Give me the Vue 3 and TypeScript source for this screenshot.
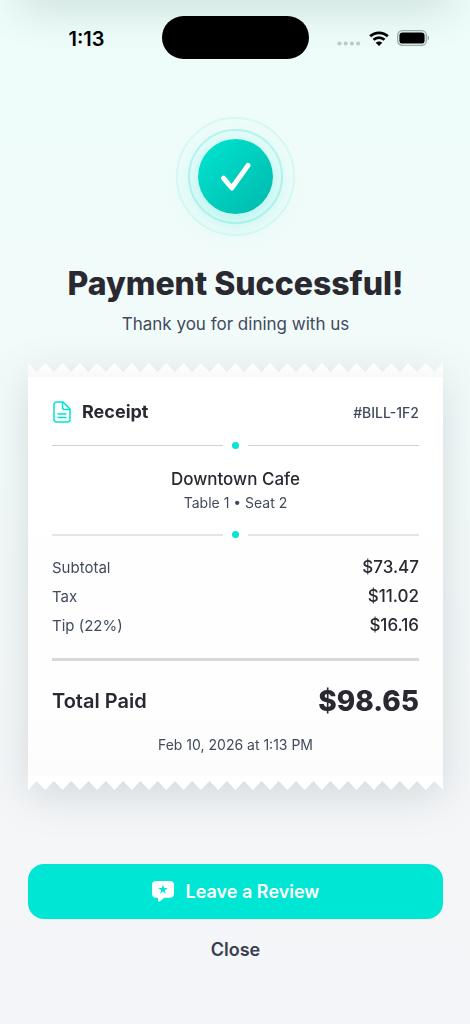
<script setup lang="ts">
interface Charge {
  label: string
  amount: string
}

const charges: Charge[] = [
  { label: 'Subtotal', amount: '$73.47' },
  { label: 'Tax', amount: '$11.02' },
  { label: 'Tip (22%)', amount: '$16.16' },
]

const TEETH = 24

// Torn paper edges: a peak at every even x, a notch at every odd x.
function zigzag(base: number, peak: number, notch: number): string {
  const points: string[] = [`0,${base}`]
  for (let i = 0; i <= TEETH * 2; i++) {
    points.push(`${i},${i % 2 === 0 ? peak : notch}`)
  }
  points.push(`${TEETH * 2},${base}`)
  return points.join(' ')
}

const viewBox = `0 0 ${TEETH * 2} 14`
const topEdge = zigzag(14, 0, 9)
const bottomEdge = zigzag(0, 14, 5)
</script>

<template>
  <div class="page">
    <div class="top-shade"></div>

    <header class="status">
      <span class="time">1:13</span>
      <span class="island"></span>
      <span class="indicators">
        <svg class="dots" viewBox="0 0 24 5" aria-hidden="true">
          <circle cx="2.5" cy="2.5" r="2.1" />
          <circle cx="8.7" cy="2.5" r="2.1" />
          <circle cx="14.9" cy="2.5" r="2.1" />
          <circle cx="21.1" cy="2.5" r="2.1" />
        </svg>
        <svg class="wifi" viewBox="0 0 20 15" aria-hidden="true">
          <path d="M1.2 5.3C6.1.6 13.9.6 18.8 5.3" />
          <path d="M4.5 8.8C7.6 5.9 12.4 5.9 15.5 8.8" />
          <path class="solid" d="M10 15 6.7 11.7c1.8-1.7 4.8-1.7 6.6 0Z" />
        </svg>
        <svg class="battery" viewBox="0 0 33 16" aria-hidden="true">
          <rect x=".7" y=".7" width="28.6" height="14.6" rx="4.6" class="shell" />
          <rect x="2.4" y="2.4" width="25.2" height="11.2" rx="3.2" />
          <path d="M30.6 5.6c2 .7 2 4.1 0 4.8Z" class="cap" />
        </svg>
      </span>
    </header>

    <main class="content">
      <div class="badge">
        <div class="ring">
          <div class="disc">
            <svg viewBox="0 0 32 32" aria-hidden="true"><path d="M3.5 17.2 11.8 27 28 4.4" /></svg>
          </div>
        </div>
      </div>
      <h1>Payment Successful!</h1>
      <p class="thanks">Thank you for dining with us</p>

      <section class="receipt">
        <svg class="edge" :viewBox="viewBox" preserveAspectRatio="none" aria-hidden="true">
          <defs>
            <linearGradient id="edge-fill" x1="0" y1="0" x2="0" y2="1">
              <stop offset="0" stop-color="#ffffff" />
              <stop offset="1" stop-color="#f8f8f8" />
            </linearGradient>
          </defs>
          <polygon :points="topEdge" fill="url(#edge-fill)" />
        </svg>
        <div class="body">
          <div class="head">
            <svg class="doc" viewBox="0 0 18 22" aria-hidden="true">
              <path d="M3.4 1H10l7 7v10.6A2.4 2.4 0 0 1 14.6 21H3.4A2.4 2.4 0 0 1 1 18.6V3.4A2.4 2.4 0 0 1 3.4 1Z" />
              <path d="M9.5 1.2V6.6A1.9 1.9 0 0 0 11.4 8.5H16.8M5 13H13M5 16.5H13" />
            </svg>
            <h2>Receipt</h2>
            <span class="bill">#BILL-1F2</span>
          </div>
          <div class="divider"><i></i></div>
          <p class="venue">Downtown Cafe</p>
          <p class="seat">Table 1 • Seat 2</p>
          <div class="divider light"><i></i></div>
          <dl class="charges">
            <div v-for="c in charges" :key="c.label" class="row">
              <dt>{{ c.label }}</dt>
              <dd>{{ c.amount }}</dd>
            </div>
          </dl>
          <div class="total">
            <span class="total-label">Total Paid</span>
            <strong>$98.65</strong>
          </div>
          <p class="date">Feb 10, 2026 at 1:13 PM</p>
        </div>
        <svg class="edge" :viewBox="viewBox" preserveAspectRatio="none" aria-hidden="true">
          <polygon :points="bottomEdge" fill="#ffffff" />
        </svg>
      </section>

      <div class="actions">
        <button type="button" class="review">
          <svg viewBox="0 0 22 21" aria-hidden="true">
            <path
              fill-rule="evenodd"
              d="M4 0H18A4 4 0 0 1 22 4V12.8A4 4 0 0 1 18 16.8H12.5L8 20.3C7 21.1 6 20.6 6 19.5V16.8H4A4 4 0 0 1 0 12.8V4A4 4 0 0 1 4 0ZM11 3.7 9.9 7.1H6.3L9.2 9.2 8.1 12.7 11 10.6 13.9 12.7 12.8 9.2 15.7 7.1H12.1Z"
            />
          </svg>
          Leave a Review
        </button>
        <button type="button" class="close">Close</button>
      </div>
    </main>
  </div>
</template>

<style>
body {
  margin: 0;
}
</style>

<style scoped>
.page {
  position: relative;
  overflow: hidden;
  box-sizing: border-box;
  min-height: 100vh;
  background: linear-gradient(180deg, #edfdfa 0%, #f1fbfa 30%, #f4f6f8 80%, #f4f5f8 100%);
  color: #2a2830;
  font-family: Inter, 'Liberation Sans', sans-serif;
}
h1,
h2,
p,
dl,
dd {
  margin: 0;
}
button {
  border: 0;
  padding: 0;
  font-family: inherit;
  cursor: pointer;
}
.top-shade {
  position: absolute;
  top: -40px;
  left: 20px;
  right: 20px;
  height: 40px;
  box-shadow: 0 8px 44px rgba(0, 40, 30, 0.15);
}
.status {
  position: relative;
  display: grid;
  grid-template-columns: 1fr 147px 1fr;
  align-items: center;
  height: 75px;
  padding-left: 1px;
}
.time {
  justify-self: center;
  padding: 2px 0 0 10px;
  color: #000;
  font-size: 20px;
  font-weight: 600;
  line-height: 24px;
}
.island {
  height: 43px;
  border-radius: 22px;
  background: #000;
}
.indicators {
  display: flex;
  align-items: center;
  padding: 1px 0 0 28px;
}
.dots {
  width: 24px;
  height: 5px;
  margin: 10px 8px 0 0;
  fill: #b9cbc8;
}
.wifi {
  width: 20px;
  height: 15px;
  margin-right: 8px;
  fill: none;
  stroke: #000;
  stroke-width: 2.8;
}
.wifi .solid {
  fill: #000;
  stroke: none;
}
.battery {
  width: 33px;
  height: 16px;
}
.battery .shell {
  fill: none;
  stroke: #9aaaa7;
  stroke-width: 1.3;
}
.battery .cap {
  fill: #9aaaa7;
}
.content {
  position: relative;
  display: flex;
  flex-direction: column;
  padding: 42px 27px 52px 28px;
}
.badge,
.ring,
.disc {
  display: flex;
  align-items: center;
  justify-content: center;
  box-sizing: border-box;
  border-radius: 50%;
}
.badge {
  align-self: center;
  width: 119px;
  height: 119px;
  border: 2px solid #d8f8f4;
}
.ring {
  width: 95px;
  height: 95px;
  border: 2px solid #bdf4ee;
}
.disc {
  width: 75px;
  height: 75px;
  background: linear-gradient(135deg, #00e5d0, #00b8ac);
  box-shadow: 0 6px 28px rgba(0, 229, 208, 0.35);
}
.disc svg {
  width: 32px;
  height: 32px;
  fill: none;
  stroke: #fff;
  stroke-width: 5;
  stroke-linecap: round;
  stroke-linejoin: round;
}
h1 {
  margin-top: 28px;
  font-size: 32px;
  font-weight: 800;
  line-height: 40px;
  text-align: center;
}
.thanks {
  margin-top: 8px;
  color: #414a5c;
  font-size: 17px;
  line-height: 24px;
  text-align: center;
}
.receipt {
  margin-top: 27px;
  filter: drop-shadow(0 10px 20px rgba(0, 20, 20, 0.13));
}
.edge {
  display: block;
  width: 100%;
  height: 14px;
}
.body {
  padding: 21px 24px;
  background: linear-gradient(180deg, #fff 0%, #fefefe 80%, #fcfcfc 100%);
}
.head {
  display: flex;
  align-items: center;
  height: 28px;
}
.doc {
  width: 18px;
  height: 22px;
  margin: 0 11px 0 1px;
  fill: none;
  stroke: #00e5d4;
  stroke-width: 1.5;
  stroke-linecap: round;
}
h2 {
  flex: 1;
  font-size: 18px;
  font-weight: 700;
  line-height: 28px;
}
.bill {
  color: #414a5c;
  font-size: 14px;
  font-weight: 500;
}
.divider {
  display: flex;
  align-items: center;
  gap: 9px;
  height: 7px;
  margin-top: 16px;
}
.divider::before,
.divider::after {
  content: '';
  flex: 1;
  height: 1px;
  background: #cfd0d2;
}
.divider i {
  width: 7px;
  height: 7px;
  border-radius: 50%;
  background: #00e5d4;
}
.light {
  margin-top: 18px;
}
.light::before,
.light::after {
  height: 2px;
  background: #e5e5e6;
}
.venue {
  margin-top: 18px;
  font-size: 17px;
  font-weight: 500;
  line-height: 24px;
  text-align: center;
}
.seat {
  margin-top: 2px;
  color: #414a5c;
  font-size: 14px;
  line-height: 20px;
  text-align: center;
}
.charges {
  margin-top: 15px;
  padding-bottom: 18px;
  border-bottom: 3px solid #d7d8d9;
}
.row {
  display: flex;
  justify-content: space-between;
  font-size: 17px;
  line-height: 29px;
}
.row dt {
  color: #414a5c;
  font-size: 15px;
}
.row dd {
  font-weight: 500;
}
.total {
  display: flex;
  align-items: center;
  justify-content: space-between;
  margin-top: 22px;
  line-height: 36px;
}
.total-label {
  font-size: 20px;
  font-weight: 600;
}
.total strong {
  font-size: 28px;
  font-weight: 800;
}
.date {
  margin-top: 16px;
  color: #414a5c;
  font-size: 14px;
  line-height: 20px;
  text-align: center;
}
.actions {
  display: flex;
  flex-direction: column;
  gap: 16px;
  margin-top: 74px;
}
.review {
  display: flex;
  align-items: center;
  justify-content: center;
  gap: 12px;
  height: 55px;
  border-radius: 16px;
  background: #00e6d4;
  color: #fff;
  font-size: 18px;
  font-weight: 600;
}
.review svg {
  width: 22px;
  height: 21px;
  fill: #fff;
}
.close {
  height: 28px;
  background: none;
  color: #38404f;
  font-size: 18px;
  font-weight: 600;
}
</style>
